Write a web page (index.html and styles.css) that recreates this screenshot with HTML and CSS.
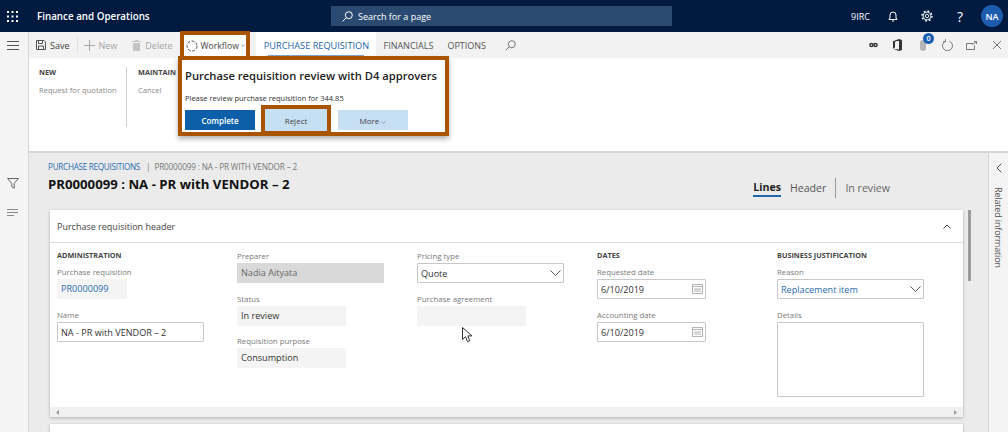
FILE: index.html
```html
<!DOCTYPE html>
<html lang="en">
<head>
  <meta charset="UTF-8" />
  <title>Finance and Operations</title>
  <link rel="stylesheet" href="styles.css">
</head>
<body>
  <header class="topbar">
    <svg class="waffle" width="11" height="11" viewBox="0 0 11 11" fill="#fff">
      <rect width="2" height="2"/><rect x="4.5" width="2" height="2"/><rect x="9" width="2" height="2"/>
      <rect y="4.5" width="2" height="2"/><rect x="4.5" y="4.5" width="2" height="2"/><rect x="9" y="4.5" width="2" height="2"/>
      <rect y="9" width="2" height="2"/><rect x="4.5" y="9" width="2" height="2"/><rect x="9" y="9" width="2" height="2"/>
    </svg>
    <div class="brand">Finance and Operations</div>
    <div class="search">
      <svg width="11" height="11" viewBox="0 0 11 11" fill="none" stroke="#fff"><circle cx="6.8" cy="4.2" r="3.5"/><path d="M4.2 6.8L.6 10.4"/></svg>
      <span>Search for a page</span>
    </div>
    <div class="top-right">
      <span class="company">9IRC</span>
      <svg class="bell" width="10" height="11" viewBox="0 0 10 11" fill="none" stroke="#fff"><path d="M1 8.5h8L8 7V4a3 3 0 0 0-6 0v3zM4 10h2"/></svg>
      <svg class="gear" width="12" height="12" viewBox="0 0 12 12" fill="none" stroke="#fff"><circle cx="6" cy="6" r="1.7" stroke-width=".9"/><circle cx="6" cy="6" r="3.9" stroke-width=".9"/><circle cx="6" cy="6" r="5" stroke-width="1.3" stroke-dasharray="1.9 2"/></svg>
      <span class="help">?</span>
      <span class="avatar">NA</span>
    </div>
  </header>

  <div class="app">
    <aside class="rail">
      <svg class="rail-menu" width="12" height="9" viewBox="0 0 12 9" stroke="#555"><path d="M0 .5h12M0 4.500h12M0 8.500h12"/></svg>
      <svg class="rail-filter" width="12" height="11" viewBox="0 0 12 11" fill="none" stroke="#666"><path d="M.5.5h11L7.200 5.500v4.800L4.800 8.600V5.500z"/></svg>
      <svg class="rail-lines" width="11" height="7" viewBox="0 0 11 7" stroke="#888"><path d="M0 .5h11M0 3.500h11M0 6.500h7"/></svg>
    </aside>

    <div class="workspace">
      <div class="toolbar">
        <div class="tool">
          <svg width="10" height="10" viewBox="0 0 10 10" fill="none" stroke="#555"><path d="M.5.5h7.500l1.500 1.500v7.500h-9zM2.500.5v3h4v-3M2.500 9.500v-3.500h5v3.500"/></svg>
          <span>Save</span>
        </div>
        <div class="tool-sep"></div>
        <div class="tool off new">
          <svg width="11" height="11" viewBox="0 0 11 11" stroke="#a8a8a8"><path d="M5.500 0v11M0 5.500h11"/></svg>
          <span>New</span>
        </div>
        <div class="tool off delete">
          <svg width="9" height="11" viewBox="0 0 9 11" fill="#c4c4c4"><path d="M3 0h3v1h3v1H0V1h3zM1 3h7v8H1z"/></svg>
          <span>Delete</span>
        </div>
        <div class="tool workflow">
          <svg width="12" height="12" viewBox="0 0 12 12" fill="none" stroke="#555" stroke-dasharray="3 1.500"><circle cx="6" cy="6" r="5"/></svg>
          <span>Workflow</span>
          <svg width="4" height="3" viewBox="0 0 4 3" fill="none" stroke="#777" stroke-width=".7"><path d="M.3.5L2 2.300 3.700.5"/></svg>
        </div>
        <div class="tab active">PURCHASE REQUISITION</div>
        <div class="tab">FINANCIALS</div>
        <div class="tab">OPTIONS</div>
        <svg class="tab-search" width="11" height="11" viewBox="0 0 11 11" fill="none" stroke="#777"><circle cx="6.800" cy="4.200" r="3.500"/><path d="M4.200 6.800L.6 10.400"/></svg>
        <div class="tool-icons">
          <svg width="9" height="6" viewBox="0 0 9 6" fill="none" stroke="#333" stroke-width="1.500"><circle cx="2.500" cy="3" r="1.600"/><circle cx="6.500" cy="3" r="1.600"/></svg>
          <svg width="9" height="12" viewBox="0 0 9 12" fill="#333"><path d="M0 2.200L6 0l3 1v10l-3 1-6-2.200 6 .8V2H3.500L2 3v5.500L0 9.800z"/></svg>
          <span class="attach">
            <svg width="6" height="11" viewBox="0 0 6 11" fill="#b5b5b5"><rect width="6" height="11" rx="3"/></svg>
            <span class="badge">0</span>
          </span>
          <svg width="11" height="12" viewBox="0 0 11 12" fill="none" stroke="#777"><path d="M3.500 2.200A5 5 0 1 0 7.500 2.200M3.500 .2v2.500H1"/></svg>
          <svg width="11" height="9" viewBox="0 0 11 9" fill="none" stroke="#777"><path d="M7 2.500H.5v6h8V4.500M6.500 3.500L10.500.5M8 .5h2.500V3"/></svg>
          <svg width="8" height="8" viewBox="0 0 8 8" stroke="#777"><path d="M0 0l8 8M8 0L0 8"/></svg>
        </div>
      </div>

      <div class="ribbon">
        <div class="rib-group first">
          <div class="rib-title">NEW</div>
          <div class="rib-link">Request for quotation</div>
        </div>
        <div class="rib-group">
          <div class="rib-title">MAINTAIN</div>
          <div class="rib-link">Cancel</div>
        </div>
      </div>

      <div class="lower">
        <main class="main">
          <div class="page-head">
            <div>
              <div class="crumbs"><span class="crumb-link">PURCHASE REQUISITIONS</span><span class="crumb-bar">|</span><span>PR0000099 : NA - PR WITH VENDOR – 2</span></div>
              <h1>PR0000099 : NA - PR with VENDOR – 2</h1>
            </div>
            <div class="views">
              <span class="view current">Lines</span>
              <span class="view">Header</span>
              <span class="view-sep"></span>
              <span class="view state">In review</span>
            </div>
          </div>

          <div class="cards">
            <div class="card-col">
              <section class="card">
                <div class="card-head">
                  <span>Purchase requisition header</span>
                  <svg width="8" height="5" viewBox="0 0 8 5" fill="none" stroke="#444"><path d="M.5 4.500L4 1l3.500 3.500"/></svg>
                </div>
                <div class="form">
                  <div class="col">
                    <div class="group-title">ADMINISTRATION</div>
                    <div class="field"><label>Purchase requisition</label><div class="ctl ro short link">PR0000099</div></div>
                    <div class="field"><label>Name</label><div class="ctl input">NA - PR with VENDOR – 2</div></div>
                  </div>
                  <div class="col">
                    <div class="field"><label>Preparer</label><div class="ctl dim">Nadia Aityata</div></div>
                    <div class="field"><label>Status</label><div class="ctl ro mid">In review</div></div>
                    <div class="field"><label>Requisition purpose</label><div class="ctl ro mid">Consumption</div></div>
                  </div>
                  <div class="col">
                    <div class="field"><label>Pricing type</label>
                      <div class="ctl input">Quote
                        <svg class="ctl-icon" width="11" height="6" viewBox="0 0 11 6" fill="none" stroke="#555"><path d="M.5.5l5 5 5-5"/></svg>
                      </div>
                    </div>
                    <div class="field"><label>Purchase agreement</label><div class="ctl ro mid"></div></div>
                  </div>
                  <div class="col">
                    <div class="group-title">DATES</div>
                    <div class="field"><label>Requested date</label>
                      <div class="ctl input date">6/10/2019
                        <svg class="ctl-icon" width="11" height="10" viewBox="0 0 11 10" fill="none" stroke="#a0a0a0" stroke-width=".8"><path d="M.5.5h10v9H.5zM.5 2.500h10M2 5h7M2 7h7"/></svg>
                      </div>
                    </div>
                    <div class="field"><label>Accounting date</label>
                      <div class="ctl input date">6/10/2019
                        <svg class="ctl-icon" width="11" height="10" viewBox="0 0 11 10" fill="none" stroke="#a0a0a0" stroke-width=".8"><path d="M.5.5h10v9H.5zM.5 2.500h10M2 5h7M2 7h7"/></svg>
                      </div>
                    </div>
                  </div>
                  <div class="col">
                    <div class="group-title">BUSINESS JUSTIFICATION</div>
                    <div class="field"><label>Reason</label>
                      <div class="ctl input blue">Replacement item
                        <svg class="ctl-icon" width="11" height="6" viewBox="0 0 11 6" fill="none" stroke="#555"><path d="M.5.5l5 5 5-5"/></svg>
                      </div>
                    </div>
                    <div class="field"><label>Details</label><div class="ctl input area"></div></div>
                  </div>
                </div>
                <div class="card-scroll">
                  <svg width="3" height="5" viewBox="0 0 3 5" fill="#999"><path d="M3 0v5L0 2.500z"/></svg>
                  <svg width="3" height="5" viewBox="0 0 3 5" fill="#999"><path d="M0 0v5l3-2.500z"/></svg>
                </div>
              </section>
              <section class="card next"></section>
            </div>
            <div class="scroll-thumb"></div>
          </div>
        </main>

        <aside class="related">
          <svg width="6" height="10" viewBox="0 0 6 10" fill="none" stroke="#555"><path d="M5.500.5L1 5l4.500 4.500"/></svg>
          <span>Related information</span>
        </aside>
      </div>
    </div>
  </div>

  <div class="flyout">
    <div class="fly-title">Purchase requisition review with D4 approvers</div>
    <div class="fly-text">Please review purchase requisition for 344.85</div>
    <div class="fly-actions">
      <button class="btn primary">Complete</button>
      <button class="btn reject">Reject</button>
      <button class="btn more">More
        <svg width="5" height="3" viewBox="0 0 5 3" fill="none" stroke="#777" stroke-width=".7"><path d="M.4.4L2.500 2.500 4.600.4"/></svg>
      </button>
    </div>
  </div>

  <svg class="cursor" width="11" height="16" viewBox="0 0 11 16" fill="#fff" stroke="#333"><path d="M.5.5v12l3-2.800 2 5 2.300-1-2-4.800h4.200z"/></svg>
</body>
</html>
```

FILE: styles.css
```css
* {
  box-sizing: border-box;
}
html, body {
  margin: 0;
  height: 432px;
  overflow: hidden;
}
body {
  font-family: "Open Sans", "Noto Sans", sans-serif;
  font-size: 9px;
  color: #333;
  background: #fff;
  position: relative;
}

/* top bar */
.topbar {
  height: 32px;
  background: #011a3f;
  color: #fff;
  display: flex;
  align-items: center;
  padding-left: 7px;
}
.brand {
  width: 294px;
  margin-left: 19px;
  font-size: 9.8px;
  font-weight: 600;
}
.search {
  width: 341px;
  height: 20px;
  background: #2b4a72;
  display: flex;
  align-items: center;
  gap: 5px;
  padding-left: 11px;
  font-size: 9px;
}
.top-right {
  margin-left: auto;
  display: flex;
  align-items: center;
  padding-right: 5px;
}
.company {
  font-size: 9px;
  margin-right: 18px;
}
.bell {
  margin-right: 23px;
}
.gear {
  margin-right: 24px;
}
.help {
  font-size: 14px;
  margin-right: 18px;
}
.avatar {
  width: 22px;
  height: 22px;
  border-radius: 50%;
  background: #1c5db0;
  font-size: 9px;
  font-weight: 600;
  display: flex;
  align-items: center;
  justify-content: center;
}

/* shell */
.app {
  display: flex;
  height: 400px;
}
.rail {
  width: 29px;
  background: #f4f4f4;
  border-right: 1px solid #d6d6d6;
  display: flex;
  flex-direction: column;
  align-items: flex-start;
  padding: 9px 0 0 7px;
}
.rail-filter {
  margin-top: 128px;
}
.rail-lines {
  margin-top: 20px;
}
.workspace {
  flex: 1;
  min-width: 0;
  display: flex;
  flex-direction: column;
}

/* toolbar */
.toolbar {
  height: 26px;
  background: #f2f2f2;
  display: flex;
  align-items: center;
  padding-left: 7px;
  font-size: 9px;
}
.tool {
  display: flex;
  align-items: center;
  gap: 4px;
  color: #444;
  flex-shrink: 0;
}
.tool-sep {
  width: 1px;
  height: 18px;
  background: #e2e2e2;
  margin: 0 6px 0 7px;
}
.tool.off {
  color: #a6a6a6;
}
.tool.delete {
  margin-left: 15px;
}
.workflow {
  background: #fff;
  width: 62px;
  height: 21px;
  margin-left: 12px;
  padding-left: 2px;
  gap: 2px;
  font-size: 8.7px;
  outline: 4px solid #a85400;
  position: relative;
  z-index: 3;
  align-self: flex-start;
  margin-top: 3px;
}
.tab {
  height: 26px;
  display: flex;
  align-items: center;
  padding: 0 7px;
  font-size: 9px;
  color: #555;
}
.tab.active {
  margin-left: 10px;
  width: 120px;
  padding: 0;
  justify-content: center;
  font-size: 9.2px;
  color: #1f66ab;
  background: linear-gradient(#7fa9d2, #7fa9d2) no-repeat center bottom 2px / 96px 1px, #fff;
}
.tab-search {
  margin-left: 12px;
}
.tool-icons {
  margin-left: auto;
  display: flex;
  align-items: center;
  padding-right: 7px;
}
.tool-icons > :nth-child(2) {
  margin-left: 15px;
}
.tool-icons > :nth-child(3) {
  margin-left: 18px;
}
.tool-icons > :nth-child(4) {
  margin-left: 16px;
}
.tool-icons > :nth-child(5) {
  margin-left: 13px;
}
.tool-icons > :nth-child(6) {
  margin-left: 16px;
}
.attach {
  position: relative;
  display: flex;
}
.badge {
  position: absolute;
  left: 3px;
  top: -7px;
  width: 11px;
  height: 11px;
  border-radius: 50%;
  background: #1c5db0;
  color: #fff;
  font-size: 7px;
  font-weight: 600;
  line-height: 11px;
  text-align: center;
}

/* ribbon */
.ribbon {
  height: 95px;
  background: #fff;
  border-bottom: 2px solid #d6d6d6;
  display: flex;
  padding-top: 9px;
}
.rib-group {
  padding-left: 11px;
  height: 60px;
}
.rib-group.first {
  width: 98px;
  padding-left: 10px;
  border-right: 1px solid #d0d0d0;
}
.rib-title {
  font-size: 7.3px;
  font-weight: 700;
  color: #444;
  line-height: 11px;
  margin-bottom: 6px;
}
.rib-link {
  font-size: 7.6px;
  color: #8a8a8a;
  line-height: 12px;
  white-space: nowrap;
}

/* content */
.lower {
  flex: 1;
  min-height: 0;
  display: flex;
}
.main {
  flex: 1;
  min-width: 0;
  background: #ebebeb;
  padding: 7px 0 0 19px;
}
.page-head {
  height: 50px;
  display: flex;
  justify-content: space-between;
  padding-right: 98px;
}
.crumbs {
  font-size: 8.2px;
  line-height: 14px;
  color: #777;
  letter-spacing: -0.15px;
}
.crumb-link {
  color: #2b6cb0;
  letter-spacing: -0.3px;
}
.crumb-bar {
  margin: 0 4px 0 6px;
}
h1 {
  margin: 1px 0 0;
  font-size: 13.2px;
  line-height: 18px;
  font-weight: 700;
  color: #111;
}
.views {
  display: flex;
  align-items: center;
  align-self: flex-end;
  height: 22px;
  margin-bottom: 11px;
  font-size: 10.6px;
  color: #555;
}
.view.current {
  font-weight: 700;
  color: #222;
  border-bottom: 2px solid #1f66ab;
  line-height: 15px;
  margin-right: 9px;
}
.view-sep {
  width: 1px;
  height: 20px;
  background: #999;
  margin: 0 9px;
}
.view.state {
  color: #666;
}
.cards {
  display: flex;
  padding-left: 2px;
}
.card-col {
  width: 913px;
}
.card {
  background: #fff;
  box-shadow: 0 1px 3px rgba(0, 0, 0, 0.25);
}
.card.next {
  height: 20px;
  margin-top: 7px;
}
.scroll-thumb {
  width: 3px;
  height: 71px;
  background: #9a9a9a;
  margin-left: 5px;
}
.card-head {
  height: 33px;
  border-bottom: 1px solid #ddd;
  display: flex;
  align-items: center;
  justify-content: space-between;
  padding: 0 12px 0 7px;
  font-size: 9px;
  color: #444;
}
.form {
  height: 164px;
  display: grid;
  grid-template-columns: repeat(5, 180px);
  padding: 6px 0 0 7px;
}
.group-title {
  font-size: 7.3px;
  font-weight: 700;
  color: #444;
  line-height: 12px;
  margin-bottom: 4px;
}
.field {
  margin-bottom: 8.5px;
}
.field label {
  display: block;
  font-size: 7.8px;
  line-height: 14px;
  color: #7a7a7a;
}
.ctl {
  position: relative;
  width: 147px;
  height: 20px;
  line-height: 20px;
  padding: 0 4px;
  font-size: 9.1px;
  color: #333;
}
.ctl.ro {
  background: #f4f4f4;
}
.ctl.short {
  width: 70px;
}
.ctl.mid {
  width: 109px;
}
.ctl.link {
  color: #2b6cb0;
}
.ctl.dim {
  background: #d9d9d9;
  color: #666;
}
.ctl.input {
  background: #fff;
  border: 1px solid #c8c8c8;
  border-radius: 1px;
  line-height: 19px;
  padding: 0 3px;
}
.ctl.date {
  width: 109px;
}
.ctl.blue {
  color: #2b6cb0;
}
.ctl.area {
  height: 75px;
}
.ctl-icon {
  position: absolute;
  right: 2px;
  top: 6px;
}
.ctl.date .ctl-icon {
  top: 4px;
}
.card-scroll {
  height: 10px;
  background: #f0f0f0;
  display: flex;
  align-items: center;
  justify-content: space-between;
  padding: 0 6px;
}

/* related information pane */
.related {
  width: 20px;
  background: #f4f4f4;
  border-left: 1px solid #d6d6d6;
  display: flex;
  flex-direction: column;
  align-items: center;
  padding-top: 10px;
}
.related span {
  writing-mode: vertical-rl;
  font-size: 9px;
  color: #555;
  margin-top: 14px;
  letter-spacing: -0.15px;
  white-space: nowrap;
}

/* workflow flyout, over the ribbon */
.flyout {
  position: absolute;
  left: 178px;
  top: 56px;
  width: 271px;
  height: 80px;
  background: #fff;
  border: 4px solid #a85400;
  box-shadow: 0 3px 5px rgba(0, 0, 0, 0.3);
  padding: 8px 3px 0;
  z-index: 2;
}
.fly-title {
  font-size: 11.2px;
  font-weight: 600;
  line-height: 16px;
  color: #222;
  white-space: nowrap;
}
.fly-text {
  font-size: 7.5px;
  line-height: 12px;
  margin-top: 8px;
  white-space: nowrap;
}
.fly-actions {
  display: flex;
  align-items: center;
  margin-top: 5px;
}
.btn {
  font-family: inherit;
  font-size: 8px;
  height: 20px;
  border: 0;
  padding: 0;
  background: #c7dff3;
  color: #444;
}
.btn.primary {
  width: 70px;
  background: #0c5fa8;
  color: #fff;
  font-weight: 600;
}
.btn.reject {
  width: 62px;
  height: 22px;
  margin-left: 10px;
  outline: 4px solid #a85400;
}
.btn.more {
  width: 70px;
  margin-left: 11px;
}

.cursor {
  position: absolute;
  left: 462px;
  top: 327px;
}
```
